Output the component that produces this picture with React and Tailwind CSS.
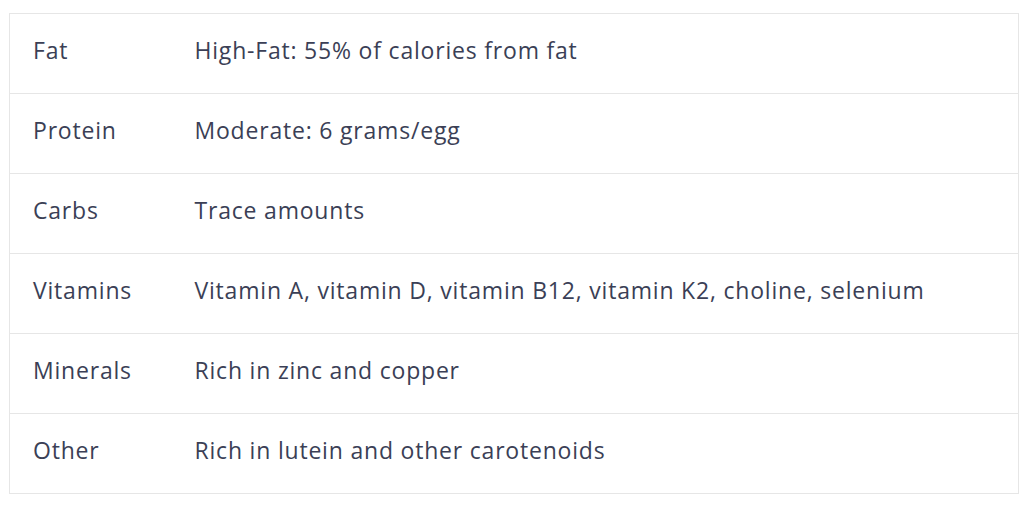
export default function App() {
  const rows = [
    ["Fat", "High-Fat: 55% of calories from fat"],
    ["Protein", "Moderate: 6 grams/egg"],
    ["Carbs", "Trace amounts"],
    ["Vitamins", "Vitamin A, vitamin D, vitamin B12, vitamin K2, choline, selenium"],
    ["Minerals", "Rich in zinc and copper"],
    ["Other", "Rich in lutein and other carotenoids"],
  ];
  return (
    <div className="w-[1028px] h-[508px] bg-white pt-[13px] pl-[9px]" style={{ fontFamily: "'Open Sans', sans-serif" }}>
      <table className="w-[1010px] table-fixed border-collapse border border-[#e6e6e6] text-[23px] tracking-[0.8px] text-[#3b3f56]">
        <tbody>
          {rows.map(([a, b]) => (
            <tr key={a} className="h-[80px] border-b border-[#e6e6e6]">
              <td className="w-[162px] pl-[23px] pb-[6px] align-middle">{a}</td>
              <td className="pl-[23px] pb-[6px] align-middle">{b}</td>
            </tr>
          ))}
        </tbody>
      </table>
    </div>
  );
}
